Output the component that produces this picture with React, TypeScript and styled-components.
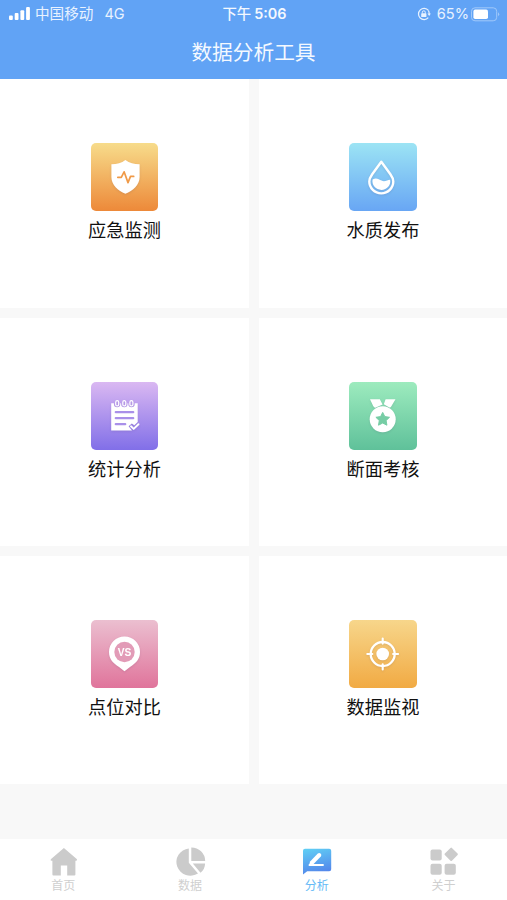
import React from "react";
import styled, { createGlobalStyle } from "styled-components";

const GlobalStyle = createGlobalStyle`
  * { box-sizing: border-box; }
  body {
    margin: 0;
    background: #f8f8f8;
    font-family: "Liberation Sans", "Noto Sans CJK SC", sans-serif;
  }
`;

const Screen = styled.div`
  width: 507px;
  height: 900px;
  display: flex;
  flex-direction: column;
  overflow: hidden;
  background: #f8f8f8;
`;

const Header = styled.header`
  height: 79px;
  flex: none;
  background: #61a3f5;
  color: #fff;
`;

const StatusBar = styled.div`
  height: 27px;
  display: grid;
  grid-template-columns: 1fr auto 1fr;
  align-items: center;
  padding: 1px 7px 0 9px;
  font-family: Inter, "Noto Sans CJK SC", sans-serif;
  font-size: 14.6px;
  line-height: 20px;
  color: #e8f2ff;
`;

const StatusGroup = styled.div<{ $end?: boolean }>`
  display: flex;
  align-items: center;
  justify-content: ${(p) => (p.$end ? "flex-end" : "flex-start")};
  white-space: pre;
  svg { display: block; flex: none; }
`;

const Carrier = styled.span`
  margin-left: 5px;
`;

const Network = styled.span`
  margin-left: 11px;
  font-size: 14.5px;
`;

const Clock = styled.div`
  display: flex;
  gap: 3px;
  font-size: 14.4px;
  font-weight: 600;
  color: #f3f8ff;
`;

const ClockPeriod = styled.span`
  font-weight: 500;
`;

const Battery = styled.span`
  margin: 0 1px 0 6px;
  font-size: 14.6px;
`;

const Title = styled.h1`
  margin: 0;
  height: 52px;
  line-height: 52px;
  text-align: center;
  font-size: 20.7px;
  font-weight: 400;
  color: #f4f9ff;
`;

const Grid = styled.main`
  flex: none;
  display: grid;
  grid-template-columns: 249px 248px;
  grid-template-rows: 229px 228px 228px;
  gap: 10px;
`;

const Card = styled.section`
  display: flex;
  flex-direction: column;
  align-items: center;
  padding-top: 64px;
  background: #fff;
`;

const Tile = styled.div<{ $from: string; $to: string }>`
  width: 67.5px;
  height: 67.5px;
  flex: none;
  border-radius: 5px;
  background: linear-gradient(${(p) => p.$from}, ${(p) => p.$to});
  svg {
    display: block;
    filter: drop-shadow(0 1px 1px rgba(60, 40, 80, 0.12));
  }
`;

const CardLabel = styled.span`
  margin-top: 6px;
  font-size: 18.2px;
  line-height: 28px;
  color: #111;
`;

const TabBar = styled.nav`
  height: 61px;
  flex: none;
  margin-top: auto;
  display: grid;
  grid-template-columns: repeat(4, 1fr);
  background: #fff;
`;

const Tab = styled.div<{ $active?: boolean }>`
  display: flex;
  flex-direction: column;
  align-items: center;
  padding-top: 8px;
  font-size: 12px;
  line-height: 16px;
  color: ${(p) => (p.$active ? "#66baf6" : "#cfcfcf")};
  svg { display: block; }
`;

const TileSvg = ({ children }: { children: React.ReactNode }) => (
  <svg width="67.5" height="67.5" viewBox="0 0 67.5 67.5" fill="none">
    {children}
  </svg>
);

const ShieldIcon = () => (
  <TileSvg>
    <path d="M34.4 17 C38.5 20 43 21 48.6 21.2 V34 C48.6 42 42 47.5 34.4 50.8 C27 47.5 20.4 42 20.4 34 V21.2 C26 21 30.5 20 34.4 17Z" fill="#fff" />
    <path d="M26.8 34.3 H30.3 L33.1 28.8 L37 39.6 L39.5 33.4 H42.7" stroke="#f09a48" strokeWidth="1.7" strokeLinejoin="round" strokeLinecap="round" />
  </TileSvg>
);

const DropIcon = () => (
  <TileSvg>
    <path d="M32.3 18.7 L23.2 31.2 C21.2 34 20.3 36 20.3 38.6 A12 11.8 0 0 0 44.3 38.6 C44.3 36 43.4 34 41.4 31.2Z" stroke="#fff" strokeWidth="2.4" strokeLinejoin="round" />
    <path d="M23.6 36.6 C27 34.2 29.6 36 32.6 37.6 C35.7 39.2 38.3 36.9 41.1 36.8 C42.3 42.2 38 46.9 32.4 46.9 C27 46.9 22.5 42.2 23.6 36.6Z" fill="#fff" />
  </TileSvg>
);

const NotepadIcon = () => (
  <TileSvg>
    <path d="M20.2 21.3 H22.9 V22 A3.2 3.2 0 0 0 29.3 22 V21.3 H30.1 V22 A3.2 3.2 0 0 0 36.5 22 V21.3 H37.3 V22 A3.2 3.2 0 0 0 43.7 22 V21.3 H46.7 V40 L43.3 43.2 L40.8 41.4 L37.6 44.3 L41 48.5 H20.2Z" fill="#fff" />
    <path d="M24.7 22.4 V20.2 A1.5 1.5 0 0 1 27.7 20.2 V22.4 A1.5 1.5 0 0 1 24.7 22.4Z M31.8 22.4 V20.2 A1.5 1.5 0 0 1 34.8 20.2 V22.4 A1.5 1.5 0 0 1 31.8 22.4Z M38.9 22.4 V20.2 A1.5 1.5 0 0 1 41.9 20.2 V22.4 A1.5 1.5 0 0 1 38.9 22.4Z" stroke="#fff" strokeWidth="1.2" />
    <path d="M24.8 30.2 H42.2 M24.8 36.2 H42.2 M24.8 42.2 H34.2" stroke="#a990e9" strokeWidth="2.3" strokeLinecap="round" />
    <path d="M40 44.3 L42.7 46.9 L47.5 42.2" stroke="#fff" strokeWidth="1.9" strokeLinecap="round" strokeLinejoin="round" />
  </TileSvg>
);

const MedalIcon = () => (
  <TileSvg>
    <path d="M21 17.2 H30.8 L33.6 22.4 L26.3 25.8 Q25 25.5 24.2 24Z M36.6 17.2 H46.5 L42.2 24.6 Q41.3 26 40 25.2 L34.8 22.3Z" fill="#fff" />
    <circle cx="33.7" cy="37.2" r="13" fill="#fff" />
    <path d="M33.7 30.4 L35.8 34.6 L40.5 35.3 L37.1 38.5 L37.9 43.2 L33.7 41 L29.5 43.2 L30.3 38.5 L26.9 35.3 L31.6 34.6Z" fill="#76cda5" stroke="#76cda5" strokeLinejoin="round" />
  </TileSvg>
);

const VersusIcon = () => (
  <TileSvg>
    <path d="M33.5 16.5 A15.4 15.4 0 0 1 49 32 C49 39.5 44.5 43.3 39.3 46.7 L33.5 51.2 L27.7 46.7 C22.5 43.3 18 39.5 18 32 A15.4 15.4 0 0 1 33.5 16.5Z" fill="#fff" />
    <circle cx="33.5" cy="32" r="10.2" fill="#e29bb7" />
    <text x="33.6" y="35.6" textAnchor="middle" fontFamily="Liberation Sans, sans-serif" fontSize="10.2" fontWeight="700" fill="#fff">VS</text>
  </TileSvg>
);

const TargetIcon = () => (
  <TileSvg>
    <circle cx="33.7" cy="34" r="12" stroke="#fff" strokeWidth="2.3" />
    <circle cx="33.7" cy="34" r="6.3" fill="#fff" />
    <path d="M33.7 18.6 V23.6 M33.7 44.4 V49.4 M18.3 34 H23.3 M44.1 34 H49.1" stroke="#fff" strokeWidth="2.1" strokeLinecap="round" />
  </TileSvg>
);

const SignalIcon = () => (
  <svg width="21" height="14" viewBox="0 0 21 14" fill="#fff">
    <rect x="0" y="8.5" width="3.8" height="4.5" rx="1" />
    <rect x="5.7" y="6" width="3.8" height="7" rx="1" />
    <rect x="11.4" y="3.2" width="3.8" height="9.8" rx="1" />
    <rect x="17.1" y="0" width="3.8" height="13" rx="1" />
  </svg>
);

const LockIcon = () => (
  <svg width="14" height="14" viewBox="0 0 14 14" fill="none">
    <path d="M11.4 3.4 A5.6 5.6 0 1 0 11.3 10.7" stroke="#e8f2ff" strokeWidth="1.2" />
    <path d="M11.4 3.4 Q12.2 5 12.2 7" stroke="#e8f2ff" strokeWidth="1.2" />
    <path d="M10.5 6.6 H13.8 L12.2 9Z" fill="#e8f2ff" />
    <rect x="4.2" y="6.3" width="5.2" height="3.7" rx=".6" fill="#e8f2ff" />
    <path d="M5.3 6.5 V5.3 A1.5 1.5 0 0 1 8.3 5.3 V6.5" stroke="#e8f2ff" />
  </svg>
);

const BatteryIcon = () => (
  <svg width="30" height="15" viewBox="0 0 30 15" fill="none">
    <rect x="1.5" y=".8" width="25.2" height="13" rx="3.5" stroke="#a0c8fa" />
    <rect x="3.4" y="2.6" width="14.6" height="9.4" rx="1.8" fill="#fff" />
    <path d="M28 5.2 Q30.4 7.2 28 9.3Z" fill="#a0c8fa" />
  </svg>
);

const HomeIcon = () => (
  <svg width="30" height="31" viewBox="0 0 30 31" fill="#cbcbcb">
    <path d="M15.9 1 L29 12.3 Q29.4 13.8 27.8 13.8 H27.4 V27.6 Q27.4 28.6 26.4 28.6 H19.2 V18.6 H12.8 V28.6 H5.4 Q4.4 28.6 4.4 27.6 V13.8 H3.8 Q2 13.8 2.8 12.3Z" />
  </svg>
);

const PieIcon = () => (
  <svg width="32" height="31" viewBox="0 0 32 31" fill="#cbcbcb">
    <path d="M14.8 1.4 V15.8 L24 26.6 A14.1 13.7 0 1 1 14.8 1.4Z" />
    <path d="M17.3 .4 A13.8 13.8 0 0 1 31.2 14 H17.3Z M18.8 16.5 H31.1 C31 20.5 29.2 23.8 26.5 25.8Z" />
  </svg>
);

const AnalysisIcon = () => (
  <svg width="30" height="31" viewBox="0 0 30 31" fill="none">
    <defs>
      <linearGradient id="bubble" x1="0" y1="0" x2=".25" y2="1">
        <stop offset="0" stopColor="#60d0f5" />
        <stop offset="1" stopColor="#5488eb" />
      </linearGradient>
    </defs>
    <path d="M1 3.8 Q1 1.8 3 1.8 H27.2 Q29.2 1.8 29.2 3.8 V22.3 Q29.2 24.3 27.2 24.3 H5.2 L1 27.6Z" fill="url(#bubble)" />
    <path d="M6.8 19 L8.1 14.6 L15.8 6.6 Q17.3 5.3 18.8 6.7 Q20 8 18.8 9.4 L11.1 17.4Z" fill="#fff" />
    <path d="M7.5 18 H21" stroke="#fff" strokeWidth="1.9" strokeLinecap="round" />
  </svg>
);

const AboutIcon = () => (
  <svg width="30" height="31" viewBox="0 0 30 31" fill="#cbcbcb">
    <rect x="1.5" y="2.4" width="11.2" height="11" rx="2" />
    <rect x="1.5" y="16.7" width="11.2" height="11" rx="2" />
    <rect x="15.6" y="16.7" width="11.2" height="11" rx="2" />
    <rect x="17.2" y="2.3" width="10" height="10" rx="1" transform="rotate(45 22.2 7.3)" />
  </svg>
);

const tools = [
  { label: "应急监测", from: "#f7dc8b", to: "#ed8939", Icon: ShieldIcon },
  { label: "水质发布", from: "#9ce4f4", to: "#68a6f4", Icon: DropIcon },
  { label: "统计分析", from: "#dab8f2", to: "#816fe8", Icon: NotepadIcon },
  { label: "断面考核", from: "#9debbe", to: "#5fc19a", Icon: MedalIcon },
  { label: "点位对比", from: "#ebbfd0", to: "#e0749b", Icon: VersusIcon },
  { label: "数据监视", from: "#f7d68b", to: "#f1aa43", Icon: TargetIcon },
];

const tabs = [
  { label: "首页", Icon: HomeIcon },
  { label: "数据", Icon: PieIcon },
  { label: "分析", Icon: AnalysisIcon, active: true },
  { label: "关于", Icon: AboutIcon },
];

export default function App() {
  return (
    <>
      <GlobalStyle />
      <Screen>
        <Header>
          <StatusBar>
            <StatusGroup>
              <SignalIcon />
              <Carrier>中国移动</Carrier>
              <Network>4G</Network>
            </StatusGroup>
            <Clock>
              <ClockPeriod>下午</ClockPeriod>
              <span>5:06</span>
            </Clock>
            <StatusGroup $end>
              <LockIcon />
              <Battery>65%</Battery>
              <BatteryIcon />
            </StatusGroup>
          </StatusBar>
          <Title>数据分析工具</Title>
        </Header>
        <Grid>
          {tools.map(({ label, from, to, Icon }) => (
            <Card key={label}>
              <Tile $from={from} $to={to}>
                <Icon />
              </Tile>
              <CardLabel>{label}</CardLabel>
            </Card>
          ))}
        </Grid>
        <TabBar>
          {tabs.map(({ label, Icon, active }) => (
            <Tab key={label} $active={active}>
              <Icon />
              {label}
            </Tab>
          ))}
        </TabBar>
      </Screen>
    </>
  );
}
